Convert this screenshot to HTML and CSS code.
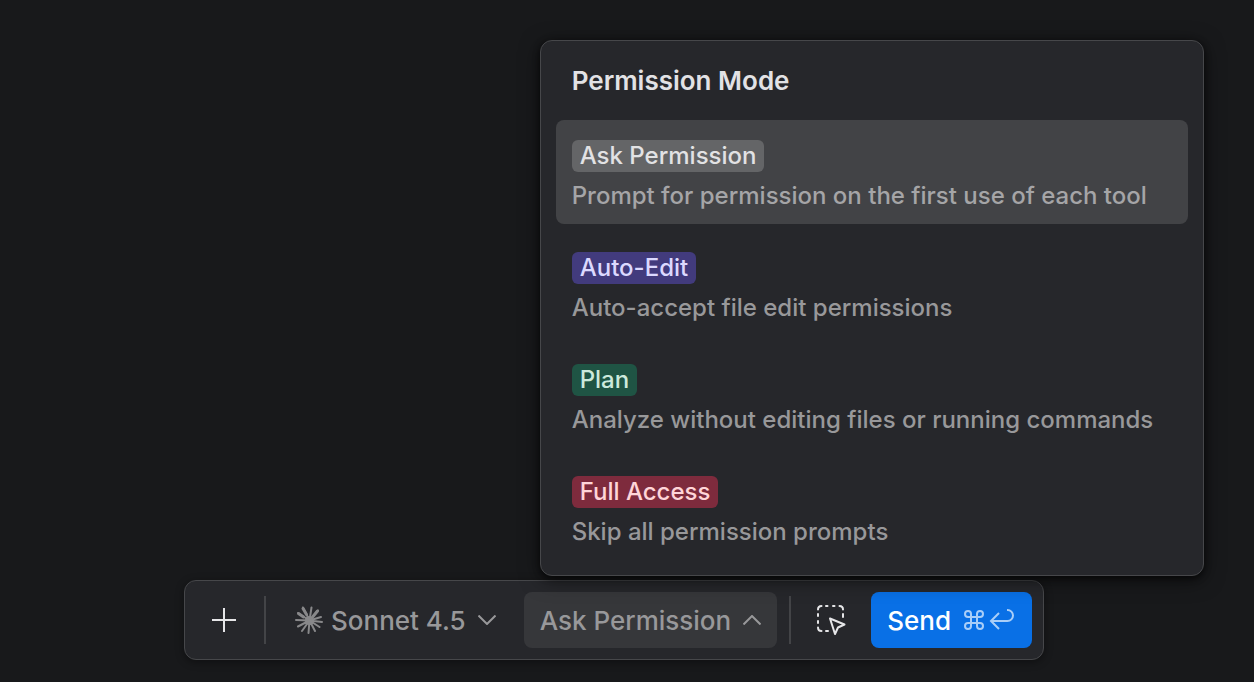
FILE: index.html
```html
<!DOCTYPE html>
<html lang="en">
<head>
    <meta charset="UTF-8">
    <meta name="viewport" content="width=device-width, initial-scale=1.0">
    <title>Permission Mode</title>
    <link rel="stylesheet" href="styles.css">
</head>
<body>
    <div class="toolbar" role="toolbar" aria-label="Message options">
        <button class="icon-button" type="button" aria-label="Add">
            <svg width="24" height="24" viewBox="0 0 24 24" fill="none" stroke="currentColor" stroke-width="2">
                <path d="M12 0v24M0 12h24"/>
            </svg>
        </button>

        <span class="divider"></span>

        <button class="select-button" type="button">
            <svg class="model-icon" width="28" height="28" viewBox="0 0 28 28" fill="none" stroke="currentColor" stroke-width="2" stroke-linecap="round">
                <path d="M14.500 14.500L16.500 1.500M14.500 14.500L23 4.500M14.500 14.500L26 11M14.500 14.500L27 16M14.500 14.500L24.500 21M14.500 14.500L20 25M14.500 14.500L13.500 27M14.500 14.500L7 25M14.500 14.500L3 20.500M14.500 14.500L1 14M14.500 14.500L3 7M14.500 14.500L8 1.500"/>
                <path d="M8 2.500l3.500 6M22.500 5l-4.500 5.500M3.500 7.500l5 3.500" stroke-width="3"/>
                <circle cx="14.500" cy="14.500" r="3.500" fill="currentColor"/>
            </svg>
            <span>Sonnet 4.5</span>
            <svg class="chevron" width="18" height="10" viewBox="0 0 18 10" fill="none" stroke="currentColor" stroke-width="2">
                <path d="M.5 .5L9 9l8.500-8.500"/>
            </svg>
        </button>

        <div class="permission">
            <button class="select-button open" type="button" aria-haspopup="menu" aria-expanded="true">
                <span>Ask Permission</span>
                <svg class="chevron" width="18" height="10" viewBox="0 0 18 10" fill="none" stroke="currentColor" stroke-width="2">
                    <path d="M.5 9.500L9 1l8.500 8.500"/>
                </svg>
            </button>

            <div class="menu" role="menu" aria-labelledby="menu-title">
                <h2 class="menu-title" id="menu-title">Permission Mode</h2>
                <button class="menu-item selected" type="button" role="menuitemradio" aria-checked="true">
                    <span class="tag tag-ask">Ask Permission</span>
                    <span class="description">Prompt for permission on the first use of each tool</span>
                </button>
                <button class="menu-item" type="button" role="menuitemradio" aria-checked="false">
                    <span class="tag tag-edit">Auto-Edit</span>
                    <span class="description">Auto-accept file edit permissions</span>
                </button>
                <button class="menu-item" type="button" role="menuitemradio" aria-checked="false">
                    <span class="tag tag-plan">Plan</span>
                    <span class="description">Analyze without editing files or running commands</span>
                </button>
                <button class="menu-item" type="button" role="menuitemradio" aria-checked="false">
                    <span class="tag tag-full">Full Access</span>
                    <span class="description">Skip all permission prompts</span>
                </button>
            </div>
        </div>

        <span class="divider"></span>

        <button class="icon-button" type="button" aria-label="Select element">
            <svg width="32" height="32" viewBox="0 0 32 32" fill="none" stroke="currentColor" stroke-width="2" stroke-linecap="round" stroke-linejoin="round">
                <path d="M3 5.500Q3 2 6.500 2M11 2h1.500M18 2h1.500M24.500 2Q28 2 28 5.500M28 10v3M3 10v2M3 17v2M3 23.500Q3 27 6.500 27M11 27h2"/>
                <path d="M15 14.500l14.500 6-6.500 3-3 6.500z"/>
            </svg>
        </button>

        <button class="send-button" type="button">
            <span>Send</span>
            <span class="shortcut">
                <svg width="22" height="22" viewBox="0 0 22 22" fill="none" stroke="currentColor" stroke-width="2">
                    <path d="M8 8H5A3 3 0 1 1 8 5v12A3 3 0 1 1 5 14h12A3 3 0 1 1 14 17V5A3 3 0 1 1 17 8z"/>
                </svg>
                <svg width="26" height="22" viewBox="0 0 26 22" fill="none" stroke="currentColor" stroke-width="2">
                    <path d="M10 4L2 12l8 8M2 12h16.500a5.500 5.500 0 0 0 0-11H18"/>
                </svg>
            </span>
        </button>
    </div>
</body>
</html>
```
FILE: styles.css
```css
* {
    box-sizing: border-box;
}

body {
    font-family: Inter, sans-serif;
    font-weight: 500;
    font-optical-sizing: none;
    background-color: #18191b;
    margin: 0;
    padding: 22px 26px 22px 0;
    min-height: 100vh;
    display: flex;
    justify-content: center;
    align-items: flex-end;
}

button {
    font: inherit;
    color: inherit;
    background: none;
    border: none;
    padding: 0;
    cursor: pointer;
}

.toolbar {
    display: flex;
    align-items: center;
    gap: 12px;
    padding: 11px;
    font-size: 26px;
    white-space: nowrap;
    color: #98989a;
    background-color: #26272b;
    border: 1px solid #46474a;
    border-radius: 12px;
    box-shadow: 0 2px 8px rgba(0, 0, 0, 0.4);
}

.divider {
    width: 2px;
    height: 48px;
    background-color: #434447;
}

.icon-button {
    display: flex;
    align-items: center;
    justify-content: center;
    width: 56px;
    height: 56px;
    color: #e6e6e8;
}

.select-button {
    display: flex;
    align-items: center;
    gap: 12px;
    height: 56px;
    padding: 0 16px;
    border-radius: 8px;
}

.select-button.open {
    background-color: #36373a;
}

.model-icon {
    margin: 0 -4px 0 1px;
    color: #88888a;
}

.permission {
    position: relative;
}

.menu {
    position: absolute;
    left: 16px;
    bottom: calc(100% + 16px);
    width: 664px;
    padding: 15px;
    display: flex;
    flex-direction: column;
    gap: 8px;
    background-color: #26272b;
    border: 1px solid #46474a;
    border-radius: 12px;
    box-shadow: 0 4px 20px rgba(0, 0, 0, 0.5), 0 2px 6px rgba(0, 0, 0, 0.6);
}

.menu-title {
    margin: 0;
    padding: 9px 16px 15px;
    font-size: 26px;
    font-weight: 600;
    line-height: 32px;
    color: #e2e2e5;
}

.menu-item {
    display: flex;
    flex-direction: column;
    align-items: flex-start;
    gap: 8px;
    padding: 20px 16px 12px;
    font-size: 24px;
    line-height: 32px;
    text-align: left;
    border-radius: 8px;
}

.menu-item.selected {
    background-color: #424346;
}

.menu-item.selected .description {
    color: #a5a5a7;
}

.description {
    color: #98989a;
}

.tag {
    padding: 0 8px;
    border-radius: 6px;
}

.tag-ask {
    color: #e2e2e4;
    background-color: #646567;
}

.tag-edit {
    color: #dcd9ff;
    background-color: #423b7d;
}

.tag-plan {
    color: #cde9dc;
    background-color: #1f5444;
}

.tag-full {
    color: #ffd5d8;
    background-color: #7e2b3d;
}

.send-button {
    display: flex;
    align-items: center;
    gap: 12px;
    height: 56px;
    padding: 0 17px 0 16px;
    color: #fff;
    background-color: #0970e6;
    border-radius: 8px;
}

.shortcut {
    display: flex;
    align-items: center;
    gap: 4px;
    color: #a9cef8;
}
```
